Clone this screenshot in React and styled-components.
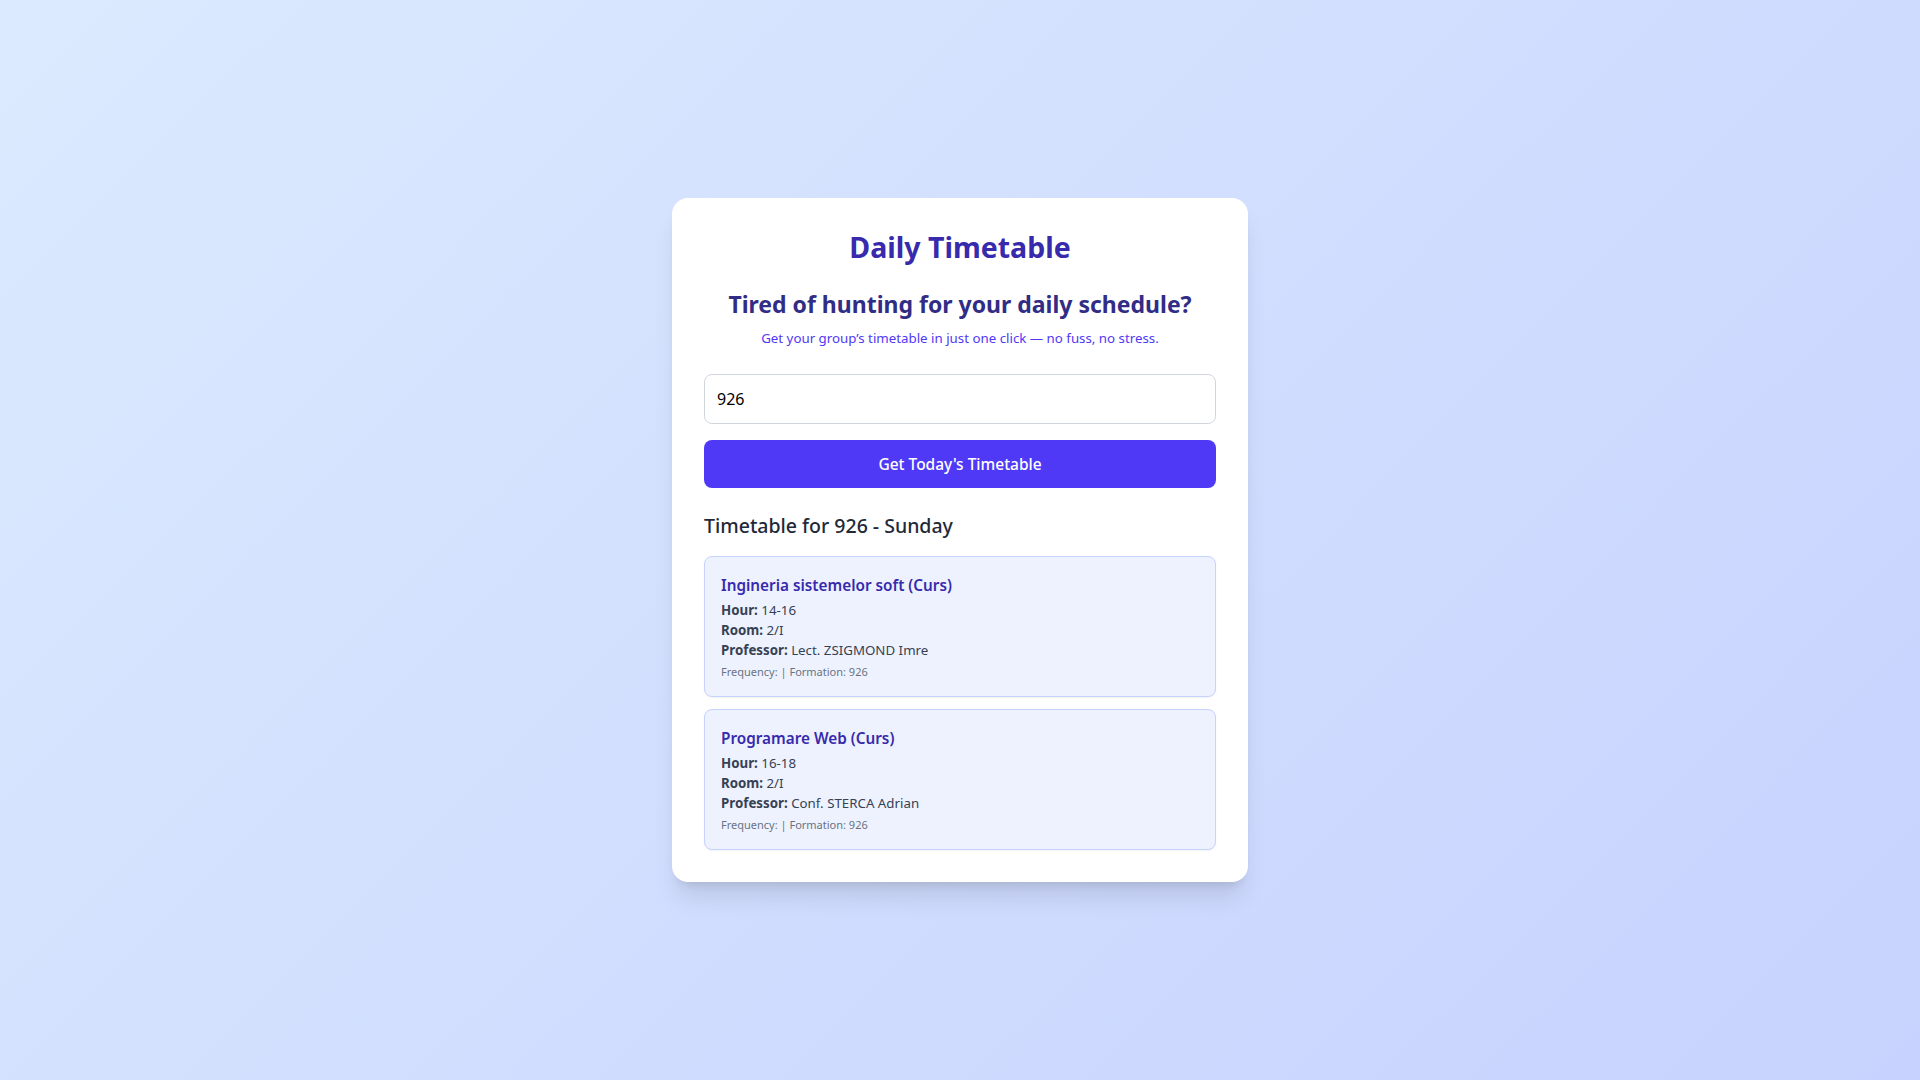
import React, { useState } from 'react';
import styled, { createGlobalStyle } from 'styled-components';

const GlobalStyle = createGlobalStyle`
  * { box-sizing: border-box; }
  html, body { margin: 0; padding: 0; }
  body {
    font-family: "Noto Sans", "Open Sans", sans-serif;
    -webkit-font-smoothing: antialiased;
  }
`;

const lessons = [
  {
    subject: 'Ingineria sistemelor soft',
    type: 'Curs',
    hour: '14-16',
    room: '2/I',
    professor: 'Lect. ZSIGMOND Imre',
    frequency: '',
    formation: '926',
  },
  {
    subject: 'Programare Web',
    type: 'Curs',
    hour: '16-18',
    room: '2/I',
    professor: 'Conf. STERCA Adrian',
    frequency: '',
    formation: '926',
  },
];

const Page = styled.main`
  min-height: 100vh;
  display: flex;
  align-items: center;
  justify-content: center;
  background: linear-gradient(135deg, #dbeafe 0%, #c7d2fe 100%);
`;

const Panel = styled.section`
  width: 576px;
  padding: 32px;
  background: #fff;
  border-radius: 16px;
  box-shadow: 0 20px 25px -5px rgba(0, 0, 0, 0.1), 0 8px 10px -6px rgba(0, 0, 0, 0.1);
`;

const Title = styled.h1`
  margin: 0 0 24px;
  text-align: center;
  font-size: 28.5px;
  line-height: 34px;
  font-weight: 700;
  color: #372aac;
`;

const Headline = styled.h2`
  margin: 0;
  text-align: center;
  font-size: 23px;
  line-height: 32px;
  font-weight: 700;
  color: #312c85;
`;

const Tagline = styled.p`
  margin: 8px 0 26px;
  text-align: center;
  font-size: 13.3px;
  line-height: 20px;
  color: #4f39f6;
`;

const GroupInput = styled.input`
  display: block;
  width: 100%;
  height: 50px;
  padding: 0 12px;
  border: 1px solid #d1d5dc;
  border-radius: 8px;
  font-family: inherit;
  font-size: 16px;
  color: #000;
  outline: none;
`;

const FetchButton = styled.button`
  display: block;
  width: 100%;
  height: 48px;
  margin-top: 16px;
  border: 0;
  border-radius: 8px;
  background: #4f39f6;
  color: #fff;
  font-family: inherit;
  font-size: 15.5px;
  font-weight: 500;
  cursor: pointer;
`;

const ResultHeading = styled.h3`
  margin: 24px 0 16px;
  font-size: 19.5px;
  line-height: 28px;
  font-weight: 500;
  color: #1e2939;
`;

const LessonList = styled.ul`
  list-style: none;
  margin: 0;
  padding: 0;
  display: flex;
  flex-direction: column;
  gap: 12px;
`;

const LessonCard = styled.li`
  padding: 16px;
  background: #eef2ff;
  border: 1px solid #c6d2ff;
  border-radius: 8px;
  box-shadow: 0 1px 2px rgba(0, 0, 0, 0.05);
`;

const LessonTitle = styled.h4`
  margin: 0 0 3px;
  font-size: 15.3px;
  line-height: 24px;
  font-weight: 600;
  color: #372aac;
`;

const Detail = styled.p`
  margin: 0;
  font-size: 13.3px;
  line-height: 20px;
  color: #364153;

  strong { font-weight: 700; }
`;

const Meta = styled.p`
  margin: 4px 0 0;
  font-size: 11px;
  line-height: 16px;
  color: #6a7282;
`;

export default function App() {
  const [group, setGroup] = useState('926');

  return (
    <>
      <GlobalStyle />
      <Page>
        <Panel>
          <Title>Daily Timetable</Title>
          <Headline>Tired of hunting for your daily schedule?</Headline>
          <Tagline>Get your group’s timetable in just one click — no fuss, no stress.</Tagline>
          <GroupInput value={group} onChange={(e) => setGroup(e.target.value)} />
          <FetchButton>Get Today's Timetable</FetchButton>
          <ResultHeading>Timetable for 926 - Sunday</ResultHeading>
          <LessonList>
            {lessons.map((l) => (
              <LessonCard key={l.subject}>
                <LessonTitle>{l.subject} ({l.type})</LessonTitle>
                <Detail><strong>Hour:</strong> {l.hour}</Detail>
                <Detail><strong>Room:</strong> {l.room}</Detail>
                <Detail><strong>Professor:</strong> {l.professor}</Detail>
                <Meta>Frequency: {l.frequency}| Formation: {l.formation}</Meta>
              </LessonCard>
            ))}
          </LessonList>
        </Panel>
      </Page>
    </>
  );
}
